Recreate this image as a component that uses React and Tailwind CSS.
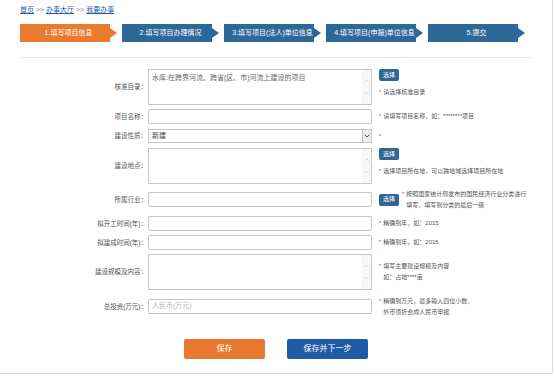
import { ChevronDown, ChevronUp } from 'lucide-react'

const steps = [
  { text: '1.填写项目信息', active: true },
  { text: '2.填写项目办理情况' },
  { text: '3.填写项目(法人)单位信息' },
  { text: '4.填写项目(申报)单位信息' },
  { text: '5.提交' },
]

function Step({ text, active }) {
  return (
    <div className="flex items-center">
      <div
        className={`w-[90px] h-[18px] pl-[7px] flex items-center justify-center text-white text-[7px] whitespace-nowrap ${
          active ? 'bg-[#ea7a2e]' : 'bg-[#2d6898]'
        }`}
      >
        {text}
      </div>
      <div
        className={`w-0 h-0 border-y-[5px] border-y-transparent border-l-[7px] ${
          active ? 'border-l-[#ea7a2e]' : 'border-l-[#2d6898]'
        }`}
      />
    </div>
  )
}

function PickButton() {
  return (
    <div className="w-[20px] h-[12px] rounded-[2px] bg-[#2f6597] text-white text-[6px] flex items-center justify-center shrink-0">
      选择
    </div>
  )
}

function Hint({ lines }) {
  return (
    <div className="flex items-start text-[6px] leading-[11px] text-[#555]">
      <span className="text-[#e0393e] mr-[2px]">*</span>
      <div className="flex flex-col whitespace-nowrap">
        {lines.map((l, i) => (
          <span key={i}>{l}</span>
        ))}
      </div>
    </div>
  )
}

function TextArea({ value }) {
  return (
    <div className="relative w-[224px] h-[36px] border border-[#c6c6c6] bg-white">
      {value && <div className="pl-[3px] pt-[3px] text-[7px] leading-[10px] text-[#666] whitespace-nowrap">{value}</div>}
      {/* old-style scrollbar */}
      <div className="absolute right-0 top-0 bottom-0 w-[9px] bg-[#f7f7f7] flex flex-col items-center justify-center gap-[4px] text-[#c4c4c4]">
        <ChevronUp size={8} strokeWidth={1.5} />
        <ChevronDown size={8} strokeWidth={1.5} />
      </div>
    </div>
  )
}

function Input({ placeholder }) {
  return (
    <div className="w-[224px] h-[15px] border border-[#c6c6c6] rounded-[2px] bg-white flex items-center pl-[3px] text-[7px] text-[#b5b5b5]">
      {placeholder}
    </div>
  )
}

function Row({ label, className, children, side }) {
  return (
    <div className={`flex ${className}`}>
      <div className="w-[148px] pr-[1px] flex items-center justify-end text-[6.5px] text-[#555] whitespace-nowrap">
        {label}
      </div>
      {children}
      <div className="ml-[7px] flex items-center">{side}</div>
    </div>
  )
}

export default function App() {
  return (
    <div
      className="w-[553px] h-[374px] bg-white border-r border-b border-[#d9d9d9] overflow-hidden"
      style={{ fontFamily: '"Liberation Sans", "Noto Sans CJK SC", sans-serif' }}
    >
      {/* Breadcrumb */}
      <div className="pl-[20px] pt-[4px] h-[15px] text-[7px] leading-[11px] text-[#888] whitespace-nowrap">
        <span className="text-[#1f5aa6] underline">首页</span>
        <span> &gt;&gt; </span>
        <span className="text-[#1f5aa6] underline">办事大厅</span>
        <span> &gt;&gt; </span>
        <span className="text-[#1f5aa6] underline">我要办事</span>
      </div>

      {/* Steps */}
      <div className="flex gap-[5px] pl-[20px] mt-[9px]">
        {steps.map((s) => (
          <Step key={s.text} {...s} />
        ))}
      </div>

      <div className="ml-[20px] mt-[15px] w-[512px] h-px bg-[#e6e6e6]" />

      {/* Form */}
      <Row
        label="核准目录："
        className="mt-[11px] h-[36px]"
        side={
          <div className="h-full flex flex-col items-start">
            <PickButton />
            <div className="mt-[6px]">
              <Hint lines={['请选择核准目录']} />
            </div>
          </div>
        }
      >
        <TextArea value="水库:在跨界河流、跨省(区、市)河流上建设的项目" />
      </Row>

      <Row label="项目名称：" className="mt-[4px] h-[15px]" side={<Hint lines={['请填写项目名称，如：********项目']} />}>
        <Input />
      </Row>

      <Row
        label="建设性质："
        className="mt-[5px] h-[14px]"
        side={<span className="text-[#e0393e] text-[6px]">*</span>}
      >
        <div className="w-[224px] h-[14px] border border-[#c6c6c6] bg-white flex items-center">
          <span className="flex-1 pl-[3px] text-[7px] text-[#444]">新建</span>
          <div className="w-[9px] h-full border-l border-[#c6c6c6] bg-[#ececec] flex items-center justify-center text-[#333]">
            <ChevronDown size={8} strokeWidth={2.5} />
          </div>
        </div>
      </Row>

      <Row
        label="建设地点："
        className="mt-[5px] h-[36px]"
        side={
          <div className="h-full flex flex-col items-start">
            <PickButton />
            <div className="mt-[6px]">
              <Hint lines={['选择项目所在地，可以跨地域选择项目所在地']} />
            </div>
          </div>
        }
      >
        <TextArea />
      </Row>

      <Row
        label="所属行业："
        className="mt-[8px] h-[15px]"
        side={
          <div className="flex items-center gap-[3px]">
            <PickButton />
            <Hint lines={['按照国家统计局发布的国民经济行业分类进行', '填写，填写到分类的最后一级']} />
          </div>
        }
      >
        <Input />
      </Row>

      <Row label="拟开工时间(年)：" className="mt-[9px] h-[15px]" side={<Hint lines={['精确到年，如：2015']} />}>
        <Input />
      </Row>

      <Row label="拟建成时间(年)：" className="mt-[4px] h-[15px]" side={<Hint lines={['精确到年，如：2015']} />}>
        <Input />
      </Row>

      <Row
        label="建设规模及内容："
        className="mt-[4px] h-[36px]"
        side={<Hint lines={['填写主要建设规模及内容', '如：占地****亩']} />}
      >
        <TextArea />
      </Row>

      <Row
        label="总投资(万元)："
        className="mt-[9px] h-[15px]"
        side={<Hint lines={['精确到万元，最多输入四位小数，', '外币须折合成人民币申报']} />}
      >
        <Input placeholder="人民币(万元)" />
      </Row>

      {/* Buttons */}
      <div className="flex justify-center gap-[22px] mt-[25px]">
        <div className="w-[81px] h-[20px] bg-[#e8782f] rounded-[2px] text-white text-[8px] flex items-center justify-center">
          保存
        </div>
        <div className="w-[81px] h-[20px] bg-[#1f5aa7] rounded-[2px] text-white text-[8px] flex items-center justify-center">
          保存并下一步
        </div>
      </div>
    </div>
  )
}
